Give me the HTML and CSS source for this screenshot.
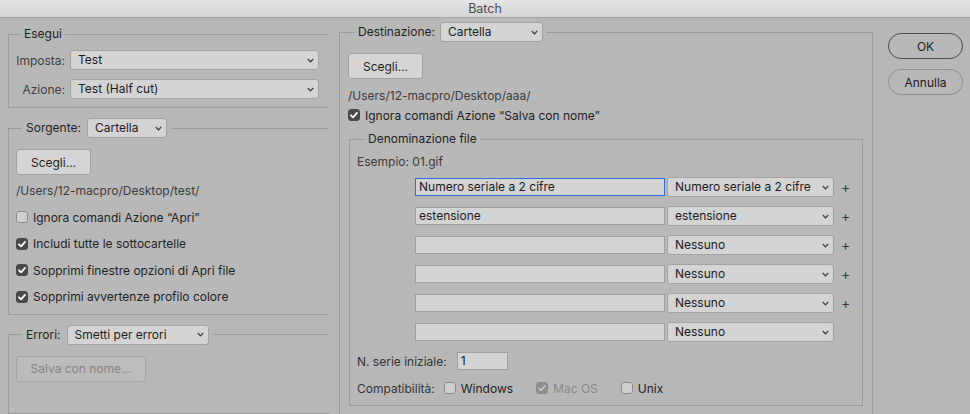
FILE: index.html
```html
<!DOCTYPE html>
<html lang="it">
<head>
<meta charset="utf-8">
<title>Batch</title>
<link rel="stylesheet" href="styles.css">
</head>
<body>
<div class="titlebar">Batch</div>
<div class="main">
  <div class="col-left">
    <fieldset class="group esegui">
      <legend>Esegui</legend>
      <div class="form-grid">
        <span class="lbl">Imposta:</span>
        <div class="select s-imposta"><span>Test</span><svg class="chev" width="7" height="5" viewBox="0 0 7 5"><path d="M0.8 1 L3.5 3.8 L6.2 1"/></svg></div>
        <span class="lbl">Azione:</span>
        <div class="select s-imposta"><span>Test (Half cut)</span><svg class="chev" width="7" height="5" viewBox="0 0 7 5"><path d="M0.8 1 L3.5 3.8 L6.2 1"/></svg></div>
      </div>
    </fieldset>

    <fieldset class="group sorgente">
      <legend class="lg-select"><span class="lg-row"><span>Sorgente:</span><span class="select s-sorg"><span>Cartella</span><svg class="chev" width="7" height="5" viewBox="0 0 7 5"><path d="M0.8 1 L3.5 3.8 L6.2 1"/></svg></span></span></legend>
      <div class="g-body">
        <button class="btn">Scegli...</button>
        <div class="path">/Users/12-macpro/Desktop/test/</div>
        <div class="checks">
          <div class="check"><span class="cb"></span><span>Ignora comandi Azione “Apri”</span></div>
          <div class="check"><span class="cb on"><svg width="12" height="12" viewBox="0 0 12 12"><path d="M3 6.3 L5.1 8.3 L9 3.9"/></svg></span><span>Includi tutte le sottocartelle</span></div>
          <div class="check"><span class="cb on"><svg width="12" height="12" viewBox="0 0 12 12"><path d="M3 6.3 L5.1 8.3 L9 3.9"/></svg></span><span>Sopprimi finestre opzioni di Apri file</span></div>
          <div class="check"><span class="cb on"><svg width="12" height="12" viewBox="0 0 12 12"><path d="M3 6.3 L5.1 8.3 L9 3.9"/></svg></span><span>Sopprimi avvertenze profilo colore</span></div>
        </div>
      </div>
    </fieldset>

    <fieldset class="group errori">
      <legend class="lg-select"><span class="lg-row"><span>Errori:</span><span class="select s-err"><span>Smetti per errori</span><svg class="chev" width="7" height="5" viewBox="0 0 7 5"><path d="M0.8 1 L3.5 3.8 L6.2 1"/></svg></span></span></legend>
      <div class="g-body err-body">
        <button class="btn btn-dis" disabled>Salva con nome...</button>
      </div>
    </fieldset>
  </div>

  <fieldset class="group dest">
    <legend class="lg-select"><span class="lg-row lg-row7"><span>Destinazione:</span><span class="select s-dest"><span>Cartella</span><svg class="chev" width="7" height="5" viewBox="0 0 7 5"><path d="M0.8 1 L3.5 3.8 L6.2 1"/></svg></span></span></legend>
    <div class="dest-body">
      <button class="btn">Scegli...</button>
      <div class="path">/Users/12-macpro/Desktop/aaa/</div>
      <div class="check dest-check"><span class="cb on"><svg width="12" height="12" viewBox="0 0 12 12"><path d="M3 6.3 L5.1 8.3 L9 3.9"/></svg></span><span>Ignora comandi Azione “Salva con nome”</span></div>

      <fieldset class="group denom">
        <legend>Denominazione file</legend>
        <div class="denom-body">
          <div class="example">Esempio: 01.gif</div>
          <div class="rows">
            <div class="name-row"><div class="field focus">Numero seriale a 2 cifre</div><div class="select s-name"><span>Numero seriale a 2 cifre</span><svg class="chev" width="7" height="5" viewBox="0 0 7 5"><path d="M0.8 1 L3.5 3.8 L6.2 1"/></svg></div><span class="plus">+</span></div>
            <div class="name-row"><div class="field">estensione</div><div class="select s-name"><span>estensione</span><svg class="chev" width="7" height="5" viewBox="0 0 7 5"><path d="M0.8 1 L3.5 3.8 L6.2 1"/></svg></div><span class="plus">+</span></div>
            <div class="name-row"><div class="field"></div><div class="select s-name"><span>Nessuno</span><svg class="chev" width="7" height="5" viewBox="0 0 7 5"><path d="M0.8 1 L3.5 3.8 L6.2 1"/></svg></div><span class="plus">+</span></div>
            <div class="name-row"><div class="field"></div><div class="select s-name"><span>Nessuno</span><svg class="chev" width="7" height="5" viewBox="0 0 7 5"><path d="M0.8 1 L3.5 3.8 L6.2 1"/></svg></div><span class="plus">+</span></div>
            <div class="name-row"><div class="field"></div><div class="select s-name"><span>Nessuno</span><svg class="chev" width="7" height="5" viewBox="0 0 7 5"><path d="M0.8 1 L3.5 3.8 L6.2 1"/></svg></div><span class="plus">+</span></div>
            <div class="name-row"><div class="field"></div><div class="select s-name"><span>Nessuno</span><svg class="chev" width="7" height="5" viewBox="0 0 7 5"><path d="M0.8 1 L3.5 3.8 L6.2 1"/></svg></div></div>
          </div>
          <div class="serie-row"><span class="lbl2">N. serie iniziale:</span><div class="field small">1</div></div>
          <div class="compat-row">
            <span class="lbl2">Compatibilità:</span>
            <span class="check c-win"><span class="cb"></span><span>Windows</span></span>
            <span class="check c-mac dis"><span class="cb on dis"><svg width="12" height="12" viewBox="0 0 12 12"><path d="M3 6.3 L5.1 8.3 L9 3.9"/></svg></span><span>Mac OS</span></span>
            <span class="check c-unix"><span class="cb"></span><span>Unix</span></span>
          </div>
        </div>
      </fieldset>
    </div>
  </fieldset>

  <div class="actions">
    <button class="pill pill-ok">OK</button>
    <button class="pill">Annulla</button>
  </div>
</div>
</body>
</html>
```

FILE: styles.css
```css
* { box-sizing: border-box; }

body {
  margin: 0;
  width: 970px;
  height: 414px;
  overflow: hidden;
  background: #b8b8b8;
  font-family: Inter, "Noto Sans", "Liberation Sans", sans-serif;
  font-size: 12px;
  color: #1e1e1e;
}

.titlebar {
  height: 18px;
  border-bottom: 1px solid #a4a4a4;
  background: linear-gradient(#e5e5e5, #d5d5d5);
  text-align: center;
  font-size: 12.5px;
  line-height: 17px;
  color: #4b4b4b;
}

.main {
  display: flex;
  align-items: flex-start;
  padding-left: 8px;
}

.col-left {
  width: 321px;
  flex: none;
  display: flex;
  flex-direction: column;
}

.group {
  margin: 0;
  padding: 0;
  min-width: 0;
  border: 1px solid #9c9c9c;
}

.col-left .group { border-right: none; }

legend {
  padding: 0 3px;
  margin-left: 14px;
  line-height: 16px;
  color: #1e1e1e;
}

legend.lg-select { padding: 0 4px; margin-left: 13px; }

.lg-row {
  display: flex;
  align-items: center;
  gap: 6px;
  line-height: 20px;
}
.lg-row7 { gap: 5px; }

/* selects */
.select {
  display: flex;
  align-items: center;
  justify-content: space-between;
  height: 20px;
  padding: 0 4px 0 7px;
  background: #d4d4d4;
  border: 1px solid #a3a3a3;
  border-radius: 3px;
  color: #1b1b1b;
  line-height: 18px;
  white-space: nowrap;
}

.chev { flex: none; }
.chev path { fill: none; stroke: #3a3a3a; stroke-width: 1.2; }

.s-imposta { width: 249px; }
.s-sorg { width: 80px; }
.s-err { width: 142px; }
.s-dest { width: 103px; }
.s-name { width: 167px; }

/* Esegui */
.esegui { margin-top: 8px; }
.esegui legend { margin-left: 12px; }

.form-grid {
  display: grid;
  grid-template-columns: 49px 249px;
  column-gap: 5px;
  row-gap: 9px;
  align-items: center;
  padding: 8px 0 8px 7px;
}

.lbl {
  text-align: right;
  color: #3e3e3e;
  white-space: nowrap;
}

/* Sorgente */
.sorgente { margin-top: 10px; }

.g-body {
  display: flex;
  flex-direction: column;
  align-items: flex-start;
  padding: 11px 0 9px 7px;
}

.btn {
  width: 75px;
  height: 26px;
  padding: 0;
  border: 1px solid #a1a1a1;
  border-radius: 3px;
  background: #d5d5d5;
  font-family: inherit;
  font-size: 12px;
  color: #1e1e1e;
}

.btn-dis {
  width: 130px;
  background: #bcbcbc;
  border-color: #a6a6a6;
  color: #868686;
}

.path {
  margin-top: 8px;
  line-height: 16px;
  color: #3b3b3b;
  white-space: nowrap;
}

.checks {
  display: flex;
  flex-direction: column;
  gap: 10.67px;
  margin-top: 10px;
}

.check {
  display: flex;
  align-items: center;
  gap: 5px;
  height: 16px;
  white-space: nowrap;
}

.cb {
  width: 12px;
  height: 12px;
  flex: none;
  border-radius: 3px;
  border: 1px solid #8d8d8d;
  background: #cfcfcf;
  display: flex;
}
.cb svg { margin: -1px; }
.cb path { fill: none; stroke: #ffffff; stroke-width: 1.8; stroke-linecap: round; stroke-linejoin: round; }
.cb.on { background: #4a4a4a; border-color: #4a4a4a; }
.cb.on.dis { background: #8c8c8c; border-color: #8c8c8c; }
.cb.on.dis path { stroke: #c4c4c4; }
.check.dis { color: #888888; }

/* Errori */
.errori { margin-top: 10px; }
.err-body { padding-bottom: 31px; }

/* Destinazione */
.dest {
  margin-top: 4px;
  margin-left: 10px;
  width: 534px;
  flex: none;
}
.dest legend.lg-select { margin-left: 15px; padding: 0 3px; }

.dest-body {
  display: flex;
  flex-direction: column;
  align-items: flex-start;
  padding: 11px 9px 30px 8px;
}

.dest-body .path { margin-top: 9px; }
.dest-check { margin-top: 3px; }

.denom {
  margin-top: 8px;
  margin-left: 1px;
  align-self: stretch;
}
.denom legend { margin-left: 15px; }

.denom-body {
  display: flex;
  flex-direction: column;
  align-items: flex-start;
  padding: 7px 0 9px 7px;
}

.example {
  line-height: 16px;
  color: #3b3b3b;
}

.rows {
  display: flex;
  flex-direction: column;
  gap: 9px;
  margin-top: 7px;
  padding-left: 58px;
}

.name-row {
  display: flex;
  align-items: center;
  gap: 2px;
  height: 20px;
}

.field {
  width: 250px;
  height: 18px;
  border: 1px solid #a0a0a0;
  background: #d4d4d4;
  padding: 0 3px;
  line-height: 16px;
  color: #1b1b1b;
  white-space: nowrap;
}
.field.focus { border-color: #2f6fdb; }
.field.small { width: 51px; }

.plus {
  margin-left: 5px;
  font-size: 14px;
  line-height: 16px;
  color: #3a3a3a;
}

.serie-row {
  display: flex;
  align-items: center;
  gap: 10px;
  margin-top: 10px;
  height: 18px;
}

.lbl2 { color: #333333; white-space: nowrap; }

.compat-row {
  display: flex;
  align-items: center;
  margin-top: 10px;
  height: 16px;
}
.compat-row .lbl2 { margin-right: 9px; }
.c-win { margin-right: 23px; }
.c-mac { margin-right: 23px; }

/* Buttons */
.actions {
  margin-left: 15px;
  margin-top: 15px;
  display: flex;
  flex-direction: column;
  gap: 10px;
}

.pill {
  width: 75px;
  height: 26px;
  padding: 0;
  border: 1px solid #8f8f8f;
  border-radius: 13px;
  background: transparent;
  font-family: inherit;
  font-size: 12px;
  color: #1c1c1c;
}
.pill-ok { border-color: #4e4e4e; }
```
